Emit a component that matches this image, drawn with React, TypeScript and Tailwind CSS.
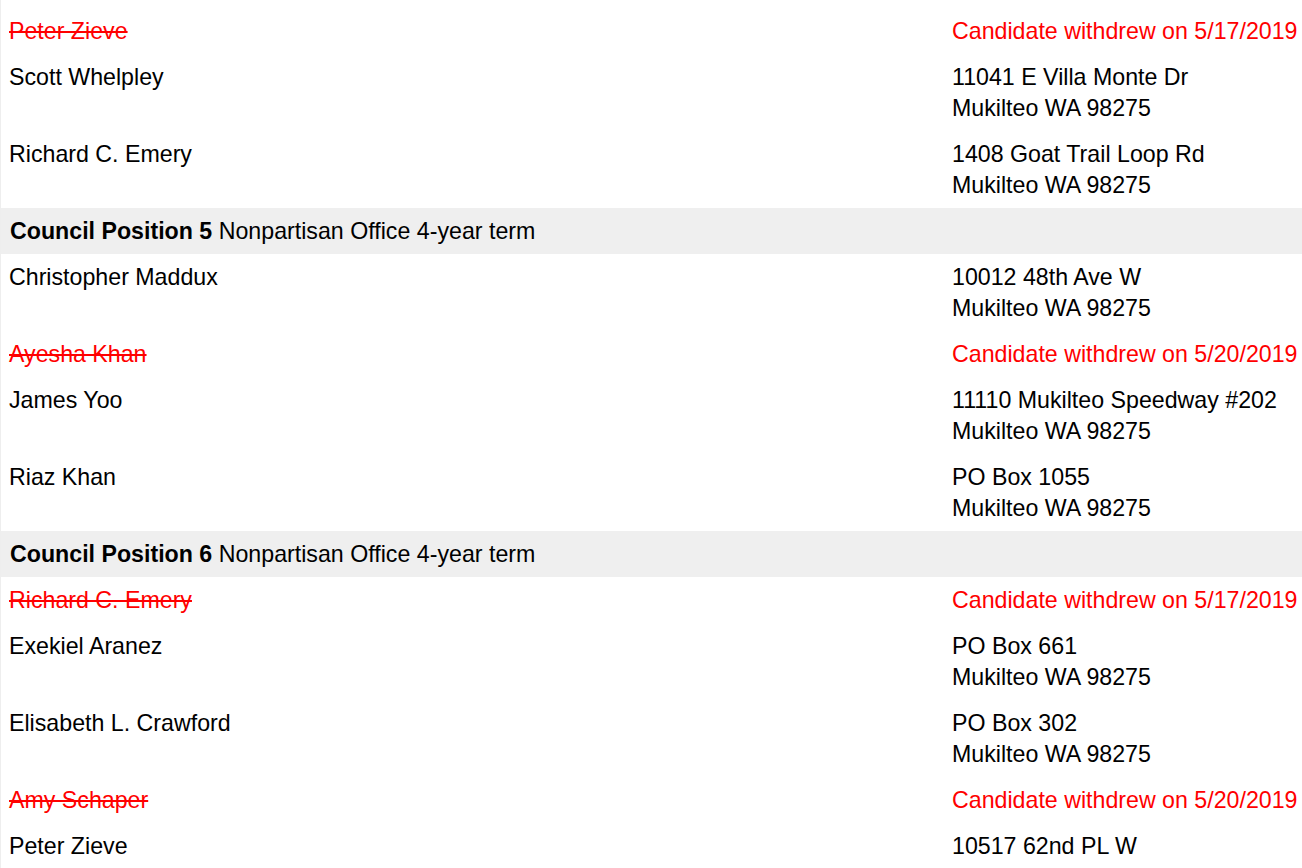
type Row =
  | { kind: "header"; title: string; note: string }
  | { kind: "withdrawn"; name: string; date: string }
  | { kind: "candidate"; name: string; street: string; city: string };

const CITY = "Mukilteo WA 98275";

const ROWS: Row[] = [
  { kind: "withdrawn", name: "Peter Zieve", date: "5/17/2019" },
  { kind: "candidate", name: "Scott Whelpley", street: "11041 E Villa Monte Dr", city: CITY },
  { kind: "candidate", name: "Richard C. Emery", street: "1408 Goat Trail Loop Rd", city: CITY },
  { kind: "header", title: "Council Position 5", note: "Nonpartisan Office 4-year term" },
  { kind: "candidate", name: "Christopher Maddux", street: "10012 48th Ave W", city: CITY },
  { kind: "withdrawn", name: "Ayesha Khan", date: "5/20/2019" },
  { kind: "candidate", name: "James Yoo", street: "11110 Mukilteo Speedway #202", city: CITY },
  { kind: "candidate", name: "Riaz Khan", street: "PO Box 1055", city: CITY },
  { kind: "header", title: "Council Position 6", note: "Nonpartisan Office 4-year term" },
  { kind: "withdrawn", name: "Richard C. Emery", date: "5/17/2019" },
  { kind: "candidate", name: "Exekiel Aranez", street: "PO Box 661", city: CITY },
  { kind: "candidate", name: "Elisabeth L. Crawford", street: "PO Box 302", city: CITY },
  { kind: "withdrawn", name: "Amy Schaper", date: "5/20/2019" },
  { kind: "candidate", name: "Peter Zieve", street: "10517 62nd PL W", city: CITY },
];

// Candidate list - one row per filing, grey bands for each office
const App = () => {
  return (
    <div className="h-[868px] overflow-hidden bg-white pt-2 font-['Liberation_Sans',Arial,sans-serif] text-[23.2px] leading-[31px] text-black border-l border-[#eeeeee]">
      {ROWS.map((row, index) => {
        if (row.kind === "header") {
          return (
            <div key={index} className="bg-[#efefef] pl-[9px] pt-[8px] pb-[7px]">
              <span className="font-bold">{row.title}</span> {row.note}
            </div>
          );
        }

        if (row.kind === "withdrawn") {
          return (
            <div key={index} className="grid grid-cols-[943px_1fr] pt-[8px] pb-[7px] text-[#ff0000]">
              <span className="pl-[8px] line-through">{row.name}</span>
              <span className="pl-2 whitespace-nowrap">Candidate withdrew on {row.date}</span>
            </div>
          );
        }

        return (
          <div key={index} className="grid grid-cols-[943px_1fr] pt-[8px] pb-[7px]">
            <span className="pl-[8px]">{row.name}</span>
            <div className="pl-2 whitespace-nowrap">
              <div>{row.street}</div>
              <div>{row.city}</div>
            </div>
          </div>
        );
      })}
    </div>
  );
};

export default App;
